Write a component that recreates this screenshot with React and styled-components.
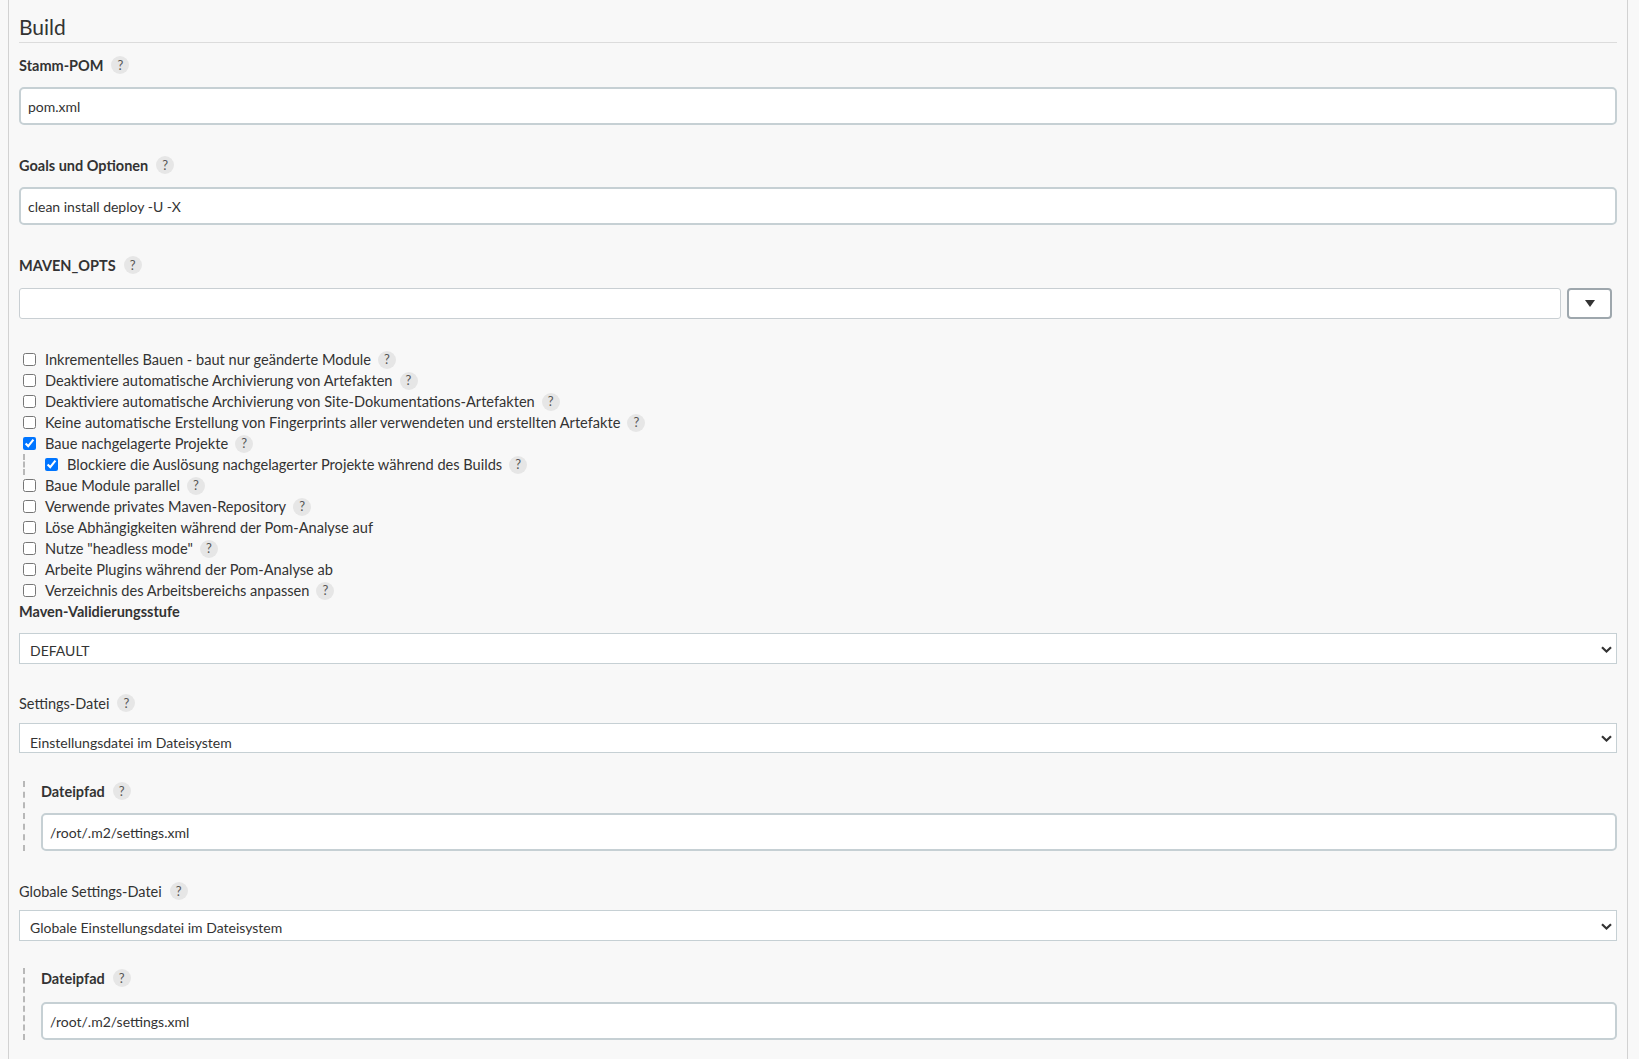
import React from "react";
import styled, { createGlobalStyle } from "styled-components";

const GlobalStyle = createGlobalStyle`
  body {
    margin: 0;
    background: #f8f8f8;
    font-family: Lato, "Open Sans", sans-serif;
    color: #333;
  }
`;

const options = [
    { label: "Inkrementelles Bauen - baut nur geänderte Module", help: true },
    { label: "Deaktiviere automatische Archivierung von Artefakten", help: true },
    { label: "Deaktiviere automatische Archivierung von Site-Dokumentations-Artefakten", help: true },
    { label: "Keine automatische Erstellung von Fingerprints aller verwendeten und erstellten Artefakte", help: true },
    {
        label: "Baue nachgelagerte Projekte",
        help: true,
        checked: true,
        nested: { label: "Blockiere die Auslösung nachgelagerter Projekte während des Builds", help: true, checked: true },
    },
    { label: "Baue Module parallel", help: true },
    { label: "Verwende privates Maven-Repository", help: true },
    { label: "Löse Abhängigkeiten während der Pom-Analyse auf" },
    { label: 'Nutze "headless mode"', help: true },
    { label: "Arbeite Plugins während der Pom-Analyse ab" },
    { label: "Verzeichnis des Arbeitsbereichs anpassen", help: true },
];

const Help = () => <HelpBadge>?</HelpBadge>;

const Chevron = () => (
    <ChevronIcon width="11" height="7" viewBox="0 0 11 7">
        <path d="M1 1.2 L5.5 5.5 L10 1.2" fill="none" stroke="#333" strokeWidth="2.2" />
    </ChevronIcon>
);

const CheckOption = ({ label, help, checked }) => (
    <CheckRow>
        <Checkbox type="checkbox" defaultChecked={checked} />
        <span>{label}</span>
        {help && <HelpSpacer><Help /></HelpSpacer>}
    </CheckRow>
);

const App = () => {
    return (
        <>
            <GlobalStyle />
            <Page>
                <SectionTitle>Build</SectionTitle>

                <Field $top={12}>
                    <Label>Stamm-POM <Help /></Label>
                    <TextInput defaultValue="pom.xml" />
                </Field>

                <Field $top={30}>
                    <Label>Goals und Optionen <Help /></Label>
                    <TextInput defaultValue="clean install deploy -U -X" />
                </Field>

                <Field $top={30}>
                    <Label $gap={13}>MAVEN_OPTS <Help /></Label>
                    <ExpandRow>
                        <SmallInput />
                        <ExpandButton>
                            <svg width="10" height="7" viewBox="0 0 10 7">
                                <path d="M0 0 H10 L5 7 Z" fill="#333" />
                            </svg>
                        </ExpandButton>
                    </ExpandRow>
                </Field>

                <CheckList>
                    {options.map((opt) => (
                        <React.Fragment key={opt.label}>
                            <CheckOption {...opt} />
                            {opt.nested && (
                                <NestedGroup>
                                    <CheckOption {...opt.nested} />
                                </NestedGroup>
                            )}
                        </React.Fragment>
                    ))}
                </CheckList>

                <Field $top={0}>
                    <Label $gap={12}>Maven-Validierungsstufe</Label>
                    <SelectWrap>
                        <Select $h={31} defaultValue="DEFAULT">
                            <option>DEFAULT</option>
                        </Select>
                        <Chevron />
                    </SelectWrap>
                </Field>

                <Field $top={29}>
                    <Label $plain $gap={10}>Settings-Datei <Help /></Label>
                    <SelectWrap>
                        <Select $h={30} $clip>
                            <option>Einstellungsdatei im Dateisystem</option>
                        </Select>
                        <Chevron />
                    </SelectWrap>
                </Field>

                <SubBlock $top={28}>
                    <Label>Dateipfad <Help /></Label>
                    <TextInput defaultValue="/root/.m2/settings.xml" />
                </SubBlock>

                <Field $top={30}>
                    <Label $plain $gap={9}>Globale Settings-Datei <Help /></Label>
                    <SelectWrap>
                        <Select $h={31}>
                            <option>Globale Einstellungsdatei im Dateisystem</option>
                        </Select>
                        <Chevron />
                    </SelectWrap>
                </Field>

                <SubBlock $top={27}>
                    <Label $gap={14}>Dateipfad <Help /></Label>
                    <TextInput defaultValue="/root/.m2/settings.xml" />
                </SubBlock>
            </Page>
        </>
    );
};

export default App;

const Page = styled.div`
    margin-left: 8px;
    width: 1620px;
    min-height: 100vh;
    box-sizing: border-box;
    padding: 0 10px 20px;
    border-left: 1px solid #d2d2d2;
    border-right: 1px solid #d2d2d2;
    background: #f8f8f8;
    font-size: 14px;
`;

const SectionTitle = styled.h2`
    margin: 0;
    padding: 14px 0 2px;
    font-size: 21px;
    line-height: 26px;
    font-weight: 400;
    color: #333;
    border-bottom: 1px solid #dcdcdc;
`;

const Field = styled.div`
    margin-top: ${(p) => p.$top || 0}px;
`;

const SubBlock = styled.div`
    margin-top: ${(p) => p.$top || 0}px;
    margin-left: 4px;
    padding-left: 16px;
    border-left: 2px dashed #b8b8b8;
`;

const Label = styled.div`
    display: flex;
    align-items: center;
    height: 20px;
    margin-bottom: ${(p) => (p.$gap !== undefined ? p.$gap : 12)}px;
    font-size: 14.5px;
    font-weight: ${(p) => (p.$plain ? 400 : 700)};
    color: #333;
    gap: 8px;
`;

const HelpBadge = styled.span`
    display: inline-flex;
    align-items: center;
    justify-content: center;
    width: 18px;
    height: 18px;
    border-radius: 50%;
    background: #e6e6e6;
    color: #555;
    font-size: 13px;
    font-weight: 400;
    line-height: 1;
`;

const HelpSpacer = styled.span`
    display: inline-flex;
    margin-left: 7px;
`;

const TextInput = styled.input`
    display: block;
    width: 100%;
    height: 38px;
    box-sizing: border-box;
    padding: 0 7px;
    border: 2px solid #c6d0d4;
    border-radius: 5px;
    background: #fff;
    font-family: Lato, "Open Sans", sans-serif;
    font-size: 14px;
    color: #333;
    outline: none;
`;

const ExpandRow = styled.div`
    display: flex;
    gap: 6px;
    padding-right: 5px;
`;

const SmallInput = styled.input`
    flex: 1;
    height: 31px;
    box-sizing: border-box;
    border: 1px solid #c9cfd3;
    border-radius: 3px;
    background: #fff;
    outline: none;
`;

const ExpandButton = styled.button`
    width: 45px;
    height: 31px;
    box-sizing: border-box;
    display: flex;
    align-items: center;
    justify-content: center;
    border: 2px solid #9ea7ad;
    border-radius: 4px;
    background: #fff;
    padding: 0;
`;

const CheckList = styled.div`
    margin-top: 30px;
`;

const CheckRow = styled.label`
    display: flex;
    align-items: center;
    height: 21px;
    font-size: 14.6px;
    color: #333;
`;

const Checkbox = styled.input`
    width: 13px;
    height: 13px;
    margin: 0 9px 0 4px;
    flex-shrink: 0;
`;

const NestedGroup = styled.div`
    margin-left: 4px;
    padding-left: 16px;
    border-left: 2px dashed #b8b8b8;
`;

const SelectWrap = styled.div`
    position: relative;
`;

const Select = styled.select`
    display: block;
    width: 100%;
    height: ${(p) => p.$h}px;
    box-sizing: border-box;
    appearance: none;
    border: 1px solid #c6d0d4;
    border-radius: 0;
    background: #fff;
    padding: ${(p) => (p.$clip ? "9px 30px 0 10px" : "4px 30px 0 10px")};
    font-family: Lato, "Open Sans", sans-serif;
    font-size: 14px;
    color: #333;
    outline: none;
`;

const ChevronIcon = styled.svg`
    position: absolute;
    right: 5px;
    top: 50%;
    margin-top: -3px;
    pointer-events: none;
`;
